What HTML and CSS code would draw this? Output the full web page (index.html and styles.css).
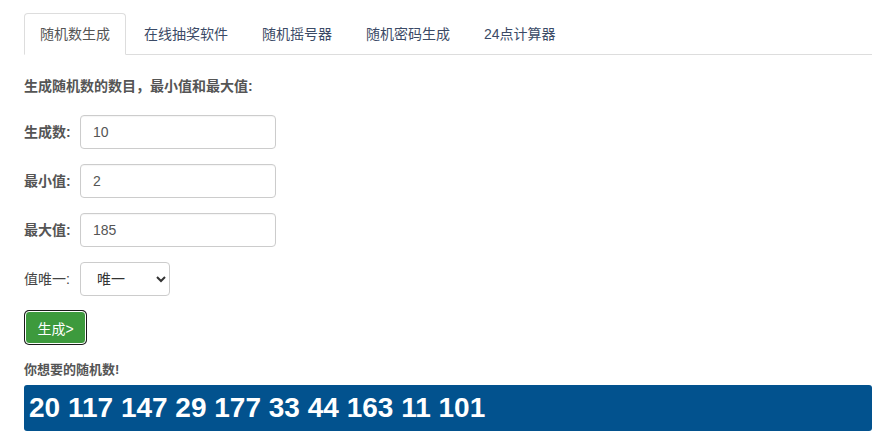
FILE: index.html
```html
<!DOCTYPE html>
<html lang="zh-CN">
<head>
<meta charset="utf-8">
<title>随机数生成</title>
<link rel="stylesheet" href="styles.css">
</head>
<body>
<div class="page">
  <ul class="tabs">
    <li class="tab active">随机数生成</li>
    <li class="tab">在线抽奖软件</li>
    <li class="tab">随机摇号器</li>
    <li class="tab">随机密码生成</li>
    <li class="tab">24点计算器</li>
  </ul>
  <div class="panel">
    <p class="heading">生成随机数的数目，最小值和最大值:</p>
    <div class="row"><label class="label">生成数:</label><input class="field" type="text" value="10"></div>
    <div class="row"><label class="label">最小值:</label><input class="field" type="text" value="2"></div>
    <div class="row"><label class="label">最大值:</label><input class="field" type="text" value="185"></div>
    <div class="row"><label class="label label-light">值唯一:</label><select class="choice"><option>唯一</option><option>可重复</option></select></div>
    <button class="go" type="button">生成&gt;</button>
    <p class="result-title">你想要的随机数!</p>
    <div class="result">20 117 147 29 177 33 44 163 11 101</div>
  </div>
</div>
</body>
</html>
```
FILE: styles.css
```css
* { box-sizing: border-box; }
html, body { margin: 0; padding: 0; background: #fff; }
body {
  font-family: "Liberation Sans", "Noto Sans CJK SC", sans-serif;
  font-size: 14px;
  line-height: 20px;
  color: #555;
}
.page {
  padding: 13px 15px 0 24px;
  width: 887px;
}
.tabs {
  list-style: none;
  margin: 0;
  padding: 0;
  display: flex;
  border-bottom: 1px solid #ddd;
}
.tab {
  padding: 10px 15px;
  margin-right: 2px;
  margin-bottom: -1px;
  border: 1px solid transparent;
  border-radius: 4px 4px 0 0;
  color: #3b4a66;
  line-height: 20px;
}
.tab.active {
  color: #555;
  background: #fff;
  border-color: #ddd;
  border-bottom-color: #fff;
}
.panel {
  display: flex;
  flex-direction: column;
  align-items: flex-start;
  padding-top: 21px;
}
.heading {
  margin: 0 0 19px;
  font-weight: bold;
  font-size: 14px;
  color: #555;
}
.row {
  display: flex;
  align-items: center;
  margin-bottom: 15px;
}
.label {
  font-weight: bold;
  color: #555;
  width: 56px;
}
.label-light { font-weight: normal; color: #444; }
.field {
  width: 196px;
  height: 34px;
  padding: 6px 12px;
  border: 1px solid #ccc;
  border-radius: 4px;
  font-family: "Liberation Sans", "Noto Sans CJK SC", sans-serif;
  font-size: 14px;
  color: #555;
  box-shadow: inset 0 1px 1px rgba(0,0,0,.04);
}
.choice {
  width: 90px;
  height: 34px;
  padding: 6px 8px 6px 12px;
  border: 1px solid #ccc;
  border-radius: 4px;
  background: #fff;
  font-family: "Liberation Sans", "Noto Sans CJK SC", sans-serif;
  font-size: 14px;
  color: #333;
}
.go {
  width: 61px;
  height: 33px;
  padding: 0;
  border: 1px solid #fff;
  border-radius: 4px;
  box-shadow: 0 0 0 1px #1a1a1a;
  background: #3d9a3d;
  color: #fff;
  font-family: "Liberation Sans", "Noto Sans CJK SC", sans-serif;
  font-size: 14px;
  margin: 0 0 16px 1px;
}
.result-title {
  margin: 0 0 5px;
  font-weight: bold;
  font-size: 13px;
  color: #555;
}
.result {
  align-self: stretch;
  background: #02528e;
  color: #fff;
  border-radius: 3px;
  font-family: "Liberation Sans", sans-serif;
  font-weight: bold;
  font-size: 28px;
  line-height: 40px;
  padding: 3px 5px;
}
```
